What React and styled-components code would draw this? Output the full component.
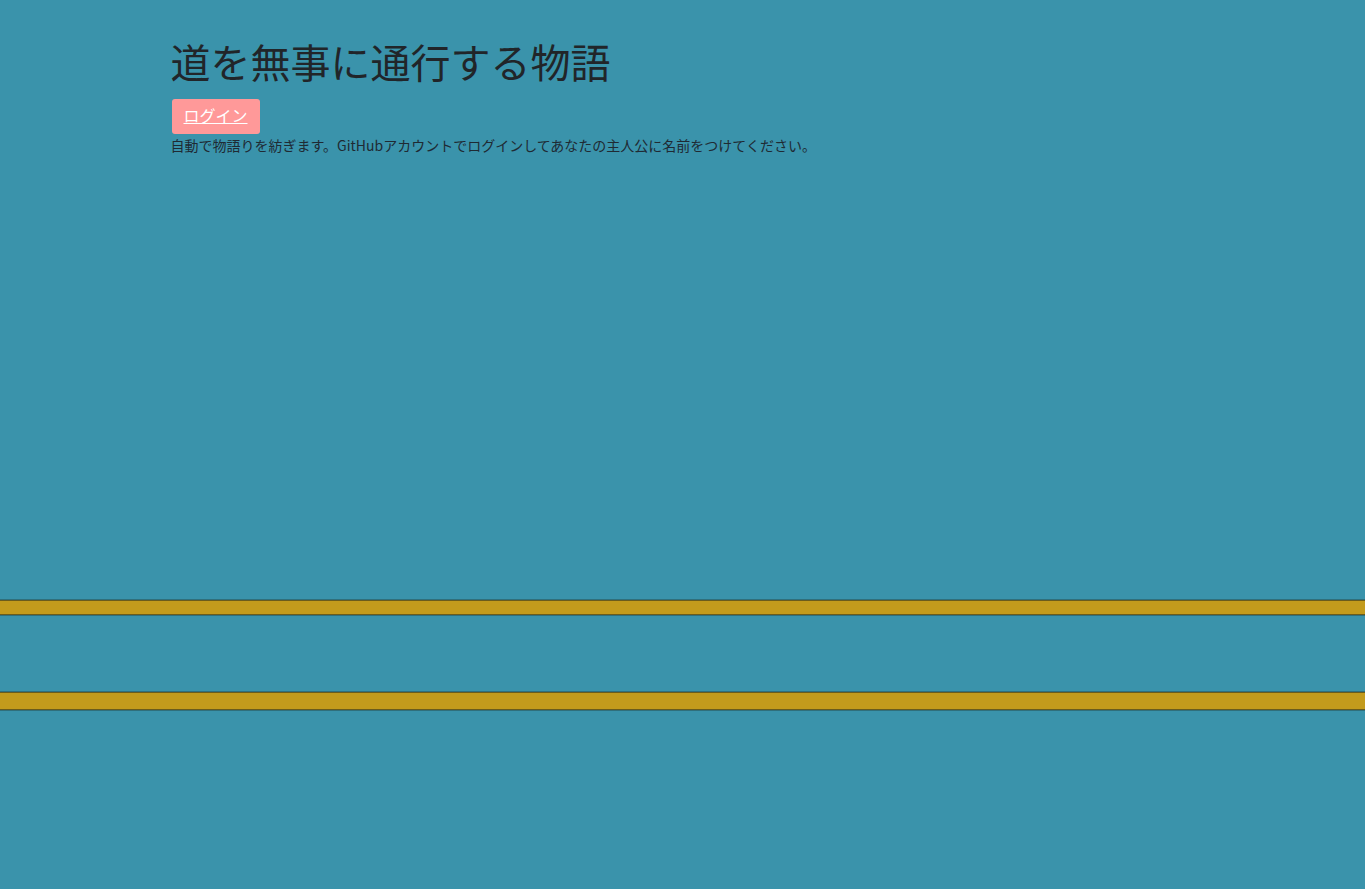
import React from "react";
import styled, { createGlobalStyle } from "styled-components";

const Global = createGlobalStyle`
  html, body {
    margin: 0;
    padding: 0;
    background: #3a93ab;
  }
  body {
    font-family: "Noto Sans CJK JP", "Noto Sans", sans-serif;
    color: #212529;
  }
`;

const Page = styled.div`
  min-height: 889px;
  background: #3a93ab;
  display: flex;
  flex-direction: column;
`;

const Container = styled.header`
  width: 1024px;
  margin: 0 auto;
  padding-top: 37px;
  box-sizing: border-box;
  height: 599px;
`;

const Title = styled.h1`
  margin: 0 0 14px;
  font-size: 40px;
  font-weight: 400;
  line-height: 48px;
  color: #212529;
`;

const LoginButton = styled.a`
  display: inline-flex;
  align-items: center;
  justify-content: center;
  box-sizing: border-box;
  margin-left: 1px;
  width: 88px;
  height: 35px;
  padding-bottom: 3px;
  background: #ff9999;
  border-radius: 3px;
  color: #ffffff;
  font-size: 16px;
  text-decoration: underline;
  cursor: pointer;
`;

const Lead = styled.p`
  margin: 1px 0 0;
  font-size: 14px;
  line-height: 20px;
  color: #1f2a33;
`;

const Road = styled.section`
  display: flex;
  flex-direction: column;
`;

const Stripe = styled.div`
  height: ${(p) => p.$h}px;
  background: #c39b1c;
  border-top: 1px solid #2f6f7c;
  border-bottom: 1px solid #2f6f7c;
  box-shadow: inset 0 1px 0 #6b5c1c, inset 0 -1px 0 #6b5c1c;
`;

const Lane = styled.div`
  height: 75px;
`;

export default function App() {
  return (
    <Page>
      <Global />
      <Container>
        <Title>道を無事に通行する物語</Title>
        <LoginButton>ログイン</LoginButton>
        <Lead>
          自動で物語りを紡ぎます。GitHubアカウントでログインしてあなたの主人公に名前をつけてください。
        </Lead>
      </Container>
      <Road>
        <Stripe $h={15} />
        <Lane />
        <Stripe $h={18} />
      </Road>
    </Page>
  );
}
